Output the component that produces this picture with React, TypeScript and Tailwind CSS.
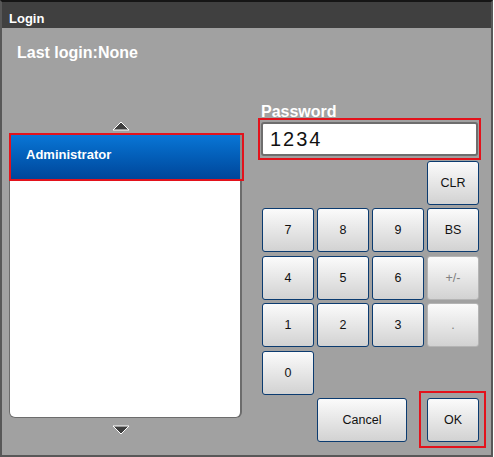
import clsx from "clsx";

function Key({ label, disabled, className }: { label: string; disabled?: boolean; className?: string }) {
  return (
    <div
      className={clsx(
        "h-[44px] flex items-center justify-center rounded-[3px] border bg-linear-to-b from-[#fbfbfb] to-[#d2d2d2] text-[12.5px]",
        disabled ? "border-[#b4b4b4] text-[#808080]" : "border-[#0b3b70] text-[#111]",
        className
      )}
    >
      {label}
    </div>
  );
}

function Arrow({ down }: { down?: boolean }) {
  return (
    <svg width="18" height="10" viewBox="0 0 18 10" className="ml-[103px]">
      <polygon
        points={down ? "1,1 17,1 9,9" : "1,9 17,9 9,1"}
        fill="#3e3e3e"
        stroke="#ffffff"
        strokeWidth="1"
      />
    </svg>
  );
}

export default function App() {
  return (
    <div className="w-[493px] h-[457px] border-2 border-[#585858] border-t-[#161616] bg-[#a1a1a1] flex flex-col font-['Liberation_Sans',Arial,sans-serif]">
      <div className="h-[26px] shrink-0 bg-[#404040] text-white font-bold text-[13px] leading-[13px] pt-[10px] pl-[7px]">
        Login
      </div>
      <div className="mt-[16px] pl-[15px] text-white font-bold text-[16px] leading-[18px]">Last login:None</div>

      <div className="flex mt-[43px] pl-[7px]">
        {/* user list */}
        <div className="w-[235px] flex flex-col">
          <div className="mt-[16px]">
            <Arrow />
          </div>
          <div className="mt-[2px] h-[48px] border-2 border-[#e3121b] flex">
            <div className="flex-1 flex items-center pl-[15px] pb-[5px] bg-linear-to-b from-[#0a76d6] to-[#00469a] border-r-2 border-[#8c8c8c] text-white font-bold text-[13px]">
              Administrator
            </div>
          </div>
          <div className="w-[233px] h-[237px] bg-white border border-t-0 border-r-2 border-[#6c6c6c] rounded-b-[6px]" />
          <div className="mt-[7px]">
            <Arrow down />
          </div>
        </div>

        {/* password + keypad */}
        <div className="ml-[14px] w-[228px] flex flex-col">
          <div className="pl-[3px] text-white font-bold text-[16px] leading-[13px]">Password</div>
          <div className="w-[223px] h-[42px] border-2 border-[#e3121b] px-[1px] py-[2px] flex">
            <div className="flex-1 flex items-center bg-white border-2 border-[#6e6e6e] rounded-[3px] pl-[7px] text-[20px] tracking-[2px] text-[#111]">
              1234
            </div>
          </div>

          <div className="pl-[4px] flex flex-col">
            <div className="mt-[1px] grid grid-cols-[repeat(4,52px)] gap-x-[3px]">
              <Key label="CLR" className="col-start-4" />
            </div>
            <div className="mt-[3px] grid grid-cols-[repeat(4,52px)] gap-x-[3px]">
              <Key label="7" />
              <Key label="8" />
              <Key label="9" />
              <Key label="BS" />
            </div>
            <div className="mt-[4px] grid grid-cols-[repeat(4,52px)] gap-x-[3px]">
              <Key label="4" />
              <Key label="5" />
              <Key label="6" />
              <Key label="+/-" disabled />
            </div>
            <div className="mt-[3px] grid grid-cols-[repeat(4,52px)] gap-x-[3px]">
              <Key label="1" />
              <Key label="2" />
              <Key label="3" />
              <Key label="." disabled />
            </div>
            <div className="mt-[4px] grid grid-cols-[repeat(4,52px)] gap-x-[3px]">
              <Key label="0" />
            </div>
            <div className="mt-[3px] flex">
              <Key label="Cancel" className="ml-[55px] w-[90px]" />
              <div className="relative ml-[20px] w-[52px]">
                <Key label="OK" />
                <span className="absolute -left-[8px] -right-[7px] -top-[7px] -bottom-[6px] border-2 border-[#e3121b]" />
              </div>
            </div>
          </div>
        </div>
      </div>
    </div>
  );
}
